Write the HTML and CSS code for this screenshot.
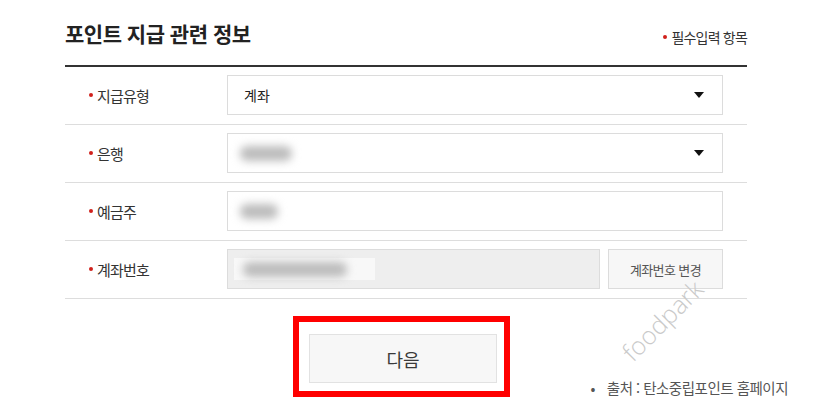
FILE: index.html
```html
<!DOCTYPE html>
<html lang="ko">
<head>
  <meta charset="UTF-8">
  <meta name="viewport" content="width=device-width, initial-scale=1">
  <title>포인트 지급 관련 정보</title>
  <link rel="stylesheet" href="styles.css">
</head>
<body>

  <div class="page">
    <div class="section">
      <div class="head">
        <h2>포인트 지급 관련 정보</h2>
        <span class="req-note"><i class="dot"></i>필수입력 항목</span>
      </div>

      <div class="row">
        <label class="lbl"><i class="dot"></i>지급유형</label>
        <div class="field">
          <div class="box select">
            <span>계좌</span>
            <span class="caret"></span>
          </div>
        </div>
      </div>

      <div class="row">
        <label class="lbl"><i class="dot"></i>은행</label>
        <div class="field">
          <div class="box select">
            <span class="blur blur-bank"></span>
            <span class="caret"></span>
          </div>
        </div>
      </div>

      <div class="row">
        <label class="lbl"><i class="dot"></i>예금주</label>
        <div class="field">
          <div class="box">
            <span class="blur blur-name"></span>
          </div>
        </div>
      </div>

      <div class="row">
        <label class="lbl"><i class="dot"></i>계좌번호</label>
        <div class="field">
          <div class="box readonly">
            <span class="mask"><span class="blur blur-acct"></span></span>
          </div>
          <button type="button" class="btn-change">계좌번호 변경</button>
        </div>
      </div>
    </div>

    <div class="bottom">
      <div class="highlight">
        <button type="button" class="btn-next">다음</button>
      </div>
      <span class="watermark">foodpark</span>
      <p class="source"><span class="src-dot">•</span>출처 : 탄소중립포인트 홈페이지</p>
    </div>
  </div>

</body>
</html>
```

FILE: styles.css
```css
body {
  margin: 0;
  background-color: #fff;
  font-family: "Noto Sans CJK KR", "Noto Sans", sans-serif;
  color: #333;
}

.page {
  width: 816px;
  height: 417px;
  overflow: hidden;
}

.section {
  width: 682px;
  margin-left: 65px;
}

.head {
  display: flex;
  justify-content: space-between;
  align-items: flex-end;
  height: 65px;
  border-bottom: 2px solid #333;
}

.head h2 {
  margin: 0 0 17px;
  font-size: 21px;
  line-height: 30px;
  font-weight: bold;
  letter-spacing: -0.5px;
  color: #222;
}

.req-note {
  display: flex;
  align-items: center;
  margin-bottom: 18px;
  font-size: 14px;
  line-height: 20px;
  letter-spacing: -0.8px;
  color: #333;
}

.dot {
  display: inline-block;
  width: 4px;
  height: 4px;
  margin-right: 4px;
  border-radius: 50%;
  background-color: #d0201b;
}

.row {
  display: flex;
  align-items: flex-start;
  height: 58px;
  padding-top: 8px;
  box-sizing: border-box;
  border-bottom: 1px solid #ddd;
}

.lbl {
  display: flex;
  align-items: center;
  width: 162px;
  height: 40px;
  padding-left: 24px;
  box-sizing: border-box;
  font-size: 15px;
  letter-spacing: -0.8px;
  color: #333;
}

.field {
  display: flex;
  gap: 8px;
  width: 496px;
}

.box {
  display: flex;
  align-items: center;
  flex: 1;
  height: 40px;
  padding: 0 16px;
  box-sizing: border-box;
  border: 1px solid #dcdcdc;
  background-color: #fff;
  font-size: 14px;
  color: #222;
}

.select {
  justify-content: space-between;
}

.caret {
  width: 0;
  height: 0;
  margin-right: 2px;
  border-left: 5px solid transparent;
  border-right: 5px solid transparent;
  border-top: 6px solid #111;
}

.readonly {
  background-color: #eee;
  padding-left: 6px;
}

.mask {
  display: flex;
  align-items: center;
  width: 141px;
  height: 22px;
  background-color: #f8f8f8;
}

.blur {
  display: block;
  height: 15px;
  border-radius: 7px;
  background-color: #bcbcbc;
  filter: blur(4px);
}

.blur-bank {
  width: 52px;
  margin-left: -4px;
  margin-right: auto;
}

.blur-name {
  width: 38px;
  margin-left: -4px;
}

.blur-acct {
  width: 104px;
  margin-left: 9px;
}

.btn-change {
  width: 115px;
  height: 40px;
  border: 1px solid #dcdcdc;
  background-color: #f7f7f7;
  font-family: inherit;
  font-size: 13px;
  letter-spacing: -0.6px;
  color: #555;
  cursor: pointer;
}

.bottom {
  position: relative;
  height: 119px;
}

.highlight {
  width: 217px;
  height: 81px;
  margin: 17px 0 0 293px;
  padding: 12px 7px 0 10px;
  box-sizing: border-box;
  border: 6px solid #ff0000;
}

.btn-next {
  width: 188px;
  height: 49px;
  border: 1px solid #e2e2e2;
  background-color: #f7f7f7;
  font-family: inherit;
  font-size: 18px;
  color: #3a3a3a;
  cursor: pointer;
}

.watermark {
  position: absolute;
  left: 638px;
  top: 18px;
  font-family: "Open Sans", sans-serif;
  font-weight: 300;
  font-size: 25px;
  color: #cacaca;
  transform: rotate(-45deg);
  transform-origin: left bottom;
}

.source {
  position: absolute;
  right: 28px;
  top: 62px;
  margin: 0;
  font-size: 14.5px;
  line-height: 20px;
  letter-spacing: -0.5px;
  color: #555;
}

.src-dot {
  display: inline-block;
  margin-right: 12px;
}
```
